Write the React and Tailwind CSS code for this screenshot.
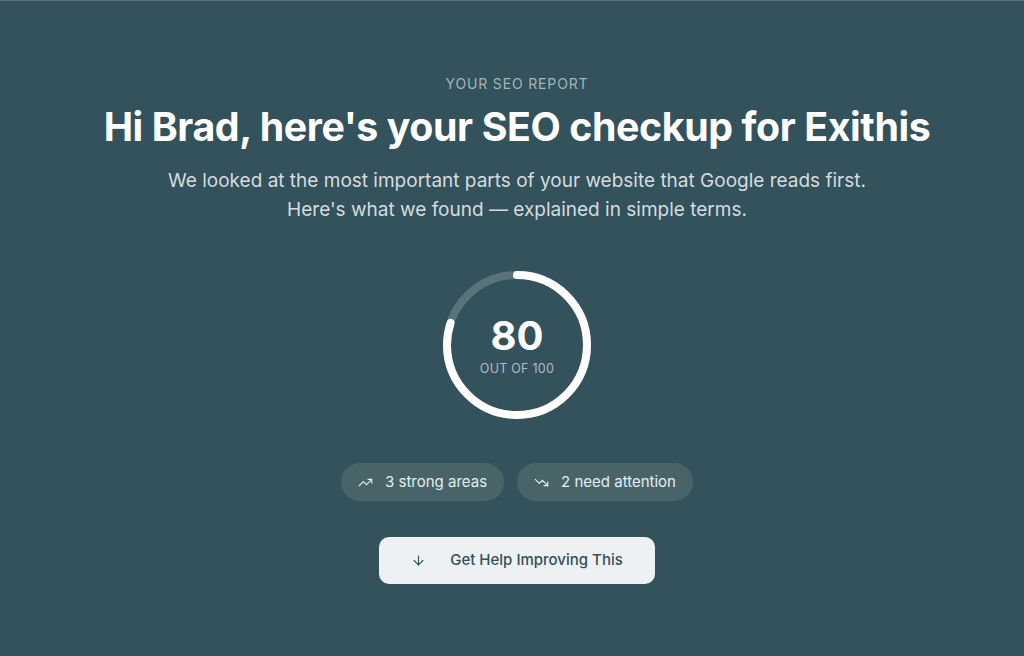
import { TrendingUp, TrendingDown, ArrowDown } from 'lucide-react';

const SCORE = 80;

function ScoreRing({ score }) {
  const r = 70;
  const c = 2 * Math.PI * r;
  const dash = (score / 100) * c;
  return (
    <div className="relative w-[152px] h-[152px]">
      <svg width="152" height="152" viewBox="0 0 152 152" className="-rotate-90">
        <circle cx="76" cy="76" r={r} fill="none" stroke="#5a737b" strokeWidth="8" />
        <circle
          cx="76"
          cy="76"
          r={r}
          fill="none"
          stroke="#ffffff"
          strokeWidth="8"
          strokeLinecap="round"
          strokeDasharray={`${dash} ${c}`}
        />
      </svg>
      <div className="absolute inset-0 flex flex-col items-center justify-center">
        <span className="text-[40px] leading-none font-bold text-white mt-[4px]">{score}</span>
        <span className="mt-[4px] text-[12.5px] tracking-[0.02em] text-[#aebdc2]">OUT OF 100</span>
      </div>
    </div>
  );
}

export default function App() {
  return (
    <div
      className="min-h-[656px] w-full bg-[#34525c] border-t border-[#5d747b] pl-[10px] flex flex-col items-center text-center"
      style={{ fontFamily: 'Inter, "Noto Sans", sans-serif' }}
    >
      <p className="mt-[72px] text-[14px] tracking-[0.06em] text-[#a3b4ba]">YOUR SEO REPORT</p>
      <h1 className="mt-[10px] text-[39.3px] leading-[46px] font-bold tracking-[-0.01em] text-white">
        Hi Brad, here's your SEO checkup for Exithis
      </h1>
      <p className="mt-[16px] text-[19px] leading-[29px] text-[#d3dcdf]">
        We looked at the most important parts of your website that Google reads first.
        <br />
        Here's what we found — explained in simple terms.
      </p>

      <div className="mt-[45px]">
        <ScoreRing score={SCORE} />
      </div>

      <div className="mt-[42px] flex gap-[13px]">
        <div className="h-[38px] px-[17px] rounded-full bg-[#486469] flex items-center gap-[12px] text-[15px] text-[#e6ecee]">
          <TrendingUp size={15} strokeWidth={1.8} />
          <span>3 strong areas</span>
        </div>
        <div className="h-[38px] px-[17px] rounded-full bg-[#486469] flex items-center gap-[12px] text-[15px] text-[#e6ecee]">
          <TrendingDown size={15} strokeWidth={1.8} />
          <span>2 need attention</span>
        </div>
      </div>

      <button
        type="button"
        className="mt-[36px] w-[276px] h-[47px] rounded-[10px] bg-[#edf1f3] flex items-center justify-center gap-[24px] text-[15px] font-medium text-[#34505a]"
      >
        <ArrowDown size={15} strokeWidth={1.8} />
        <span>Get Help Improving This</span>
      </button>
    </div>
  );
}
